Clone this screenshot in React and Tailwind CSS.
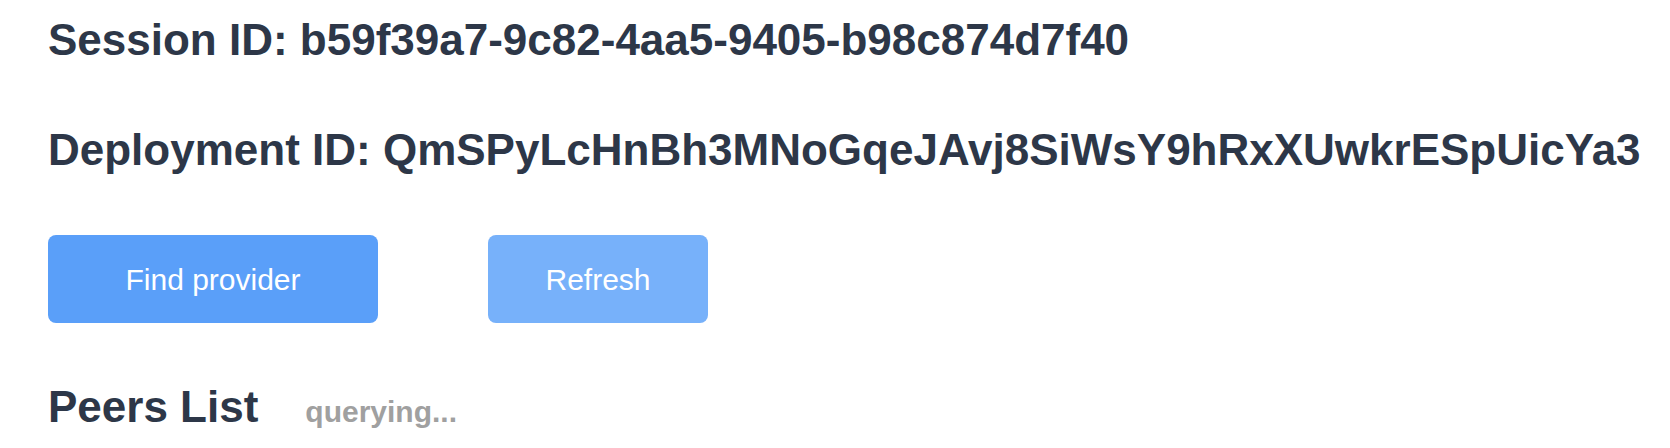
export default function App() {
  return (
    <div className="min-h-[448px] bg-white pl-12 pt-[18px] font-['Liberation_Sans',Arial,sans-serif] text-[#2d3748]">
      <h2 className="text-[44px] leading-[44px] font-bold whitespace-nowrap">
        Session ID: b59f39a7-9c82-4aa5-9405-b98c874d7f40
      </h2>
      <h2 className="mt-[66px] text-[44px] leading-[44px] font-bold whitespace-nowrap">
        Deployment ID: QmSPyLcHnBh3MNoGqeJAvj8SiWsY9hRxXUwkrESpUicYa3
      </h2>
      <div className="mt-[63px] flex gap-[110px]">
        <button className="h-[88px] w-[330px] rounded-lg bg-[#5a9ff9] text-[30px] text-white">
          Find provider
        </button>
        <button className="h-[88px] w-[220px] rounded-lg bg-[#77b1fa] text-[30px] text-white">
          Refresh
        </button>
      </div>
      <div className="mt-[62px] flex items-baseline gap-[47px] whitespace-nowrap">
        <h2 className="text-[44px] leading-[44px] font-bold">Peers List</h2>
        <span className="text-[30px] font-bold text-[#a0a0a0]">querying...</span>
      </div>
    </div>
  );
}
